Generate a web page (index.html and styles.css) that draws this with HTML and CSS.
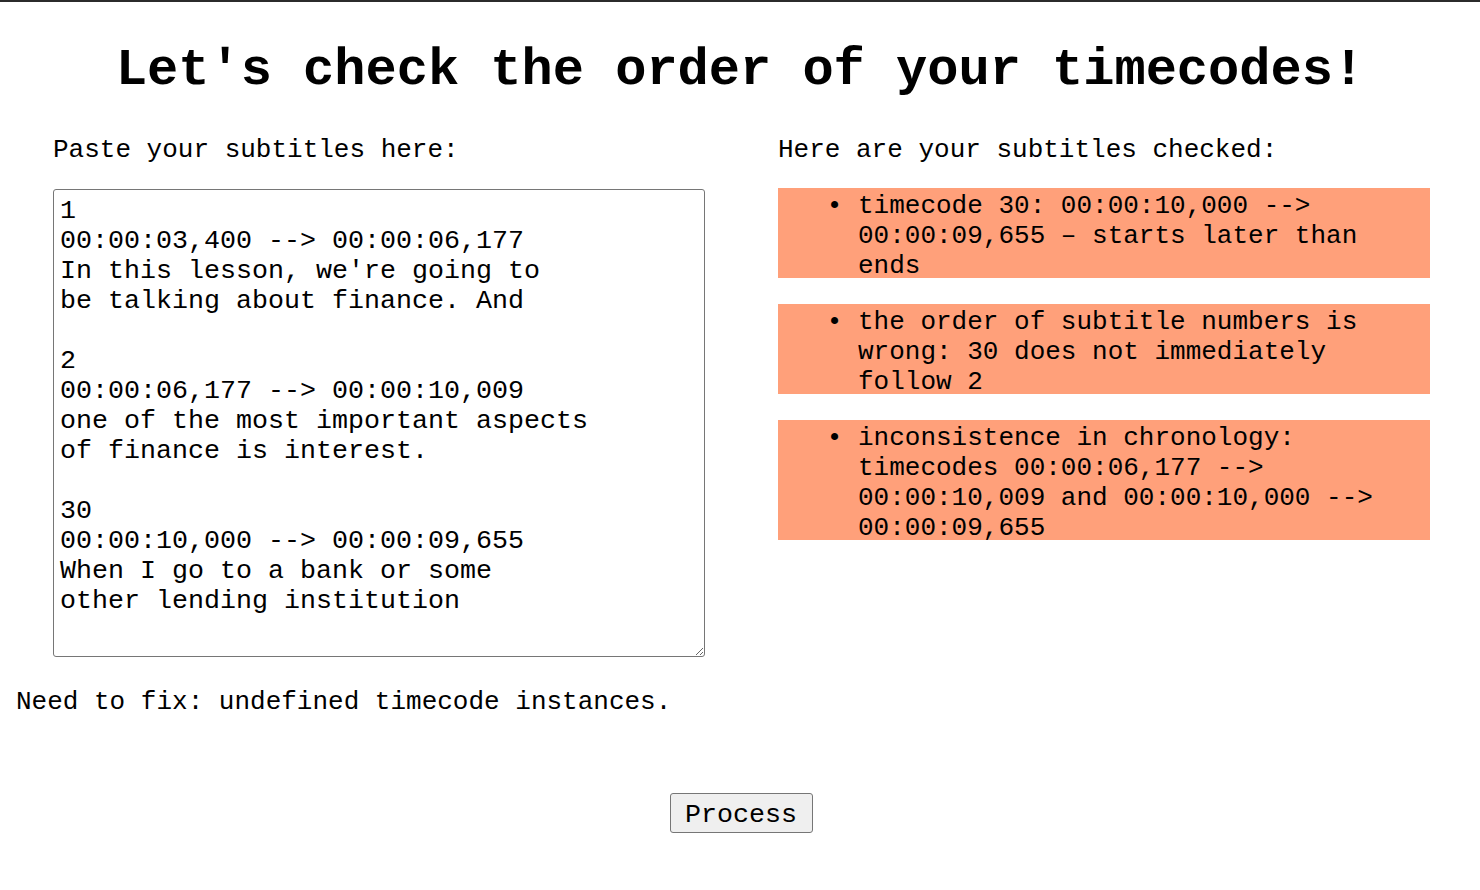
FILE: index.html
```html
<!DOCTYPE html>
<html lang="en">
<head>
<meta charset="utf-8">
<title>Timecode order checker</title>
<link rel="stylesheet" href="styles.css">
</head>
<body>
<div class="topline"></div>
<h1 class="title">Let's check the order of your timecodes!</h1>
<div class="columns">
  <section class="col">
    <p class="label">Paste your subtitles here:</p>
    <textarea class="input" spellcheck="false">1
00:00:03,400 --&gt; 00:00:06,177
In this lesson, we're going to
be talking about finance. And

2
00:00:06,177 --&gt; 00:00:10,009
one of the most important aspects
of finance is interest.

30
00:00:10,000 --&gt; 00:00:09,655
When I go to a bank or some
other lending institution</textarea>
  </section>
  <section class="col">
    <p class="label">Here are your subtitles checked:</p>
    <div class="results">
      <ul class="issue"><li>timecode 30: 00:00:10,000 --&gt; 00:00:09,655 – starts later than ends</li></ul>
      <ul class="issue"><li>the order of subtitle numbers is wrong: 30 does not immediately follow 2</li></ul>
      <ul class="issue"><li>inconsistence in chronology: timecodes 00:00:06,177 --&gt; 00:00:10,009 and 00:00:10,000 --&gt; 00:00:09,655</li></ul>
    </div>
  </section>
</div>
<p class="status">Need to fix: undefined timecode instances.</p>
<div class="actions">
  <button class="process" type="button">Process</button>
</div>
</body>
</html>
```

FILE: styles.css
```css
html, body {
  margin: 0;
  padding: 0;
  background: #ffffff;
}

body {
  font-family: "Courier New", Courier, "Liberation Mono", monospace;
  font-size: 26px;
  line-height: 30px;
  color: #000000;
}

.topline {
  height: 2px;
  background: #2b2b2b;
}

.title {
  margin: 39px 0 0;
  font-size: 52px;
  line-height: 60px;
  font-weight: bold;
  text-align: center;
}

.columns {
  display: flex;
  gap: 73px;
  padding-left: 53px;
  margin-top: 32px;
}

.col {
  width: 652px;
  flex: none;
}

.label {
  margin: 0;
  padding-top: 2px;
}

.input {
  display: block;
  box-sizing: border-box;
  width: 652px;
  height: 468px;
  margin-top: 24px;
  padding: 6px 6px;
  border: 1px solid #767676;
  border-radius: 3px;
  font-family: "Courier New", Courier, "Liberation Mono", monospace;
  font-size: 26.67px;
  line-height: 30px;
  color: #000000;
  resize: both;
  outline: none;
}

.results {
  display: flex;
  flex-direction: column;
  gap: 26px;
  margin-top: 23px;
}

.issue {
  display: flow-root;
  margin: 0;
  padding: 3px 0 0 80px;
  background: #ffa07a;
  list-style: disc;
}

.issue li {
  margin: 0 0 -3px;
}

.issue li::marker {
  content: "\2022  ";
}

.status {
  margin: 30px 0 0 16px;
}

.actions {
  display: flex;
  justify-content: center;
  margin-top: 76px;
  padding-left: 2px;
}

.process {
  box-sizing: border-box;
  width: 143px;
  height: 40px;
  padding: 3px 0 0;
  border: 1px solid #767676;
  border-radius: 3px;
  background: #efefef;
  font-family: "Courier New", Courier, "Liberation Mono", monospace;
  font-size: 26.67px;
  line-height: 30px;
  color: #000000;
}
```
